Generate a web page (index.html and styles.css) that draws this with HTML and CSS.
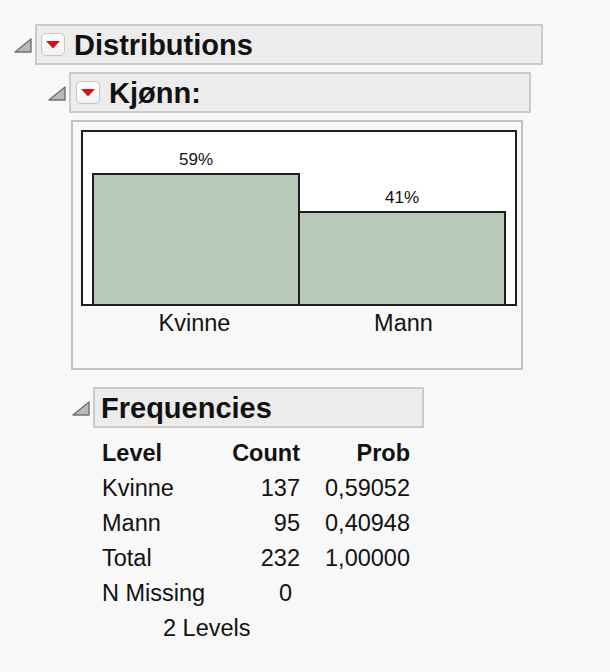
FILE: index.html
```html
<!DOCTYPE html>
<html lang="no">
<head>
<meta charset="utf-8">
<title>Distributions</title>
<link rel="stylesheet" href="styles.css">
</head>
<body>
<div class="report">
  <section class="outline">
    <div class="outline-head">
      <svg class="toggle" viewBox="0 0 18 15" width="18" height="15"><polygon points="1,14 17,14 17,1" /></svg>
      <div class="title-box box-dist">
        <span class="menu-btn"><svg viewBox="0 0 14 8" width="14" height="8"><polygon points="0,0 14,0 7,7.5" /></svg></span>
        <span class="title">Distributions</span>
      </div>
    </div>
    <div class="outline-body body-dist">
      <section class="outline">
        <div class="outline-head">
          <svg class="toggle" viewBox="0 0 18 15" width="18" height="15"><polygon points="1,14 17,14 17,1" /></svg>
          <div class="title-box box-var">
            <span class="menu-btn"><svg viewBox="0 0 14 8" width="14" height="8"><polygon points="0,0 14,0 7,7.5" /></svg></span>
            <span class="title">Kjønn:</span>
          </div>
        </div>
        <div class="outline-body body-var">
          <div class="chart-box">
            <div class="plot">
              <div class="col">
                <span class="pct">59%</span>
                <div class="bar" style="height:129px"></div>
              </div>
              <div class="col col-next">
                <span class="pct">41%</span>
                <div class="bar" style="height:91px"></div>
              </div>
            </div>
            <div class="axis">
              <span class="axis-label">Kvinne</span>
              <span class="axis-label">Mann</span>
            </div>
          </div>

          <section class="outline freq">
            <div class="outline-head">
              <svg class="toggle" viewBox="0 0 18 15" width="18" height="15"><polygon points="1,14 17,14 17,1" /></svg>
              <div class="title-box box-freq">
                <span class="title">Frequencies</span>
              </div>
            </div>
            <div class="freq-table">
              <span class="th">Level</span><span class="th num">Count</span><span class="th num">Prob</span>
              <span>Kvinne</span><span class="num">137</span><span class="num">0,59052</span>
              <span>Mann</span><span class="num">95</span><span class="num">0,40948</span>
              <span>Total</span><span class="num">232</span><span class="num">1,00000</span>
              <span>N Missing</span><span class="num missing">0</span><span></span>
              <span class="levels">2 Levels</span>
            </div>
          </section>
        </div>
      </section>
    </div>
  </section>
</div>
</body>
</html>
```

FILE: styles.css
```css
html, body {
  margin: 0;
  background: #f8f8f8;
}

body {
  font-family: "Liberation Sans", Arial, sans-serif;
  color: #121212;
}

.report {
  padding: 24px 0 0 14px;
}

/* outline node header: disclosure triangle + title bar */
.outline-head {
  display: flex;
  align-items: center;
}

.toggle {
  flex: none;
  margin-right: 3px;
  margin-top: 1px;
}

.toggle polygon {
  fill: #b9b9b9;
  stroke: #707070;
  stroke-width: 1.4;
  stroke-linejoin: round;
}

.title-box {
  box-sizing: border-box;
  height: 41px;
  display: flex;
  align-items: center;
  gap: 9px;
  padding: 0 5px 0 4px;
  background: #ececec;
  border: 2px solid #cbcbcb;
}

.box-dist { width: 508px; }
.box-var { width: 462px; padding-left: 5px; }
.box-freq { width: 331px; padding-left: 6px; }

.menu-btn {
  box-sizing: border-box;
  width: 24px;
  height: 23px;
  display: flex;
  align-items: center;
  justify-content: center;
  background: linear-gradient(#ffffff, #f2f2f2);
  border: 1.5px solid #c6c6c6;
  border-radius: 5px;
}

.menu-btn svg {
  margin-top: 1px;
}

.menu-btn polygon {
  fill: #d2121c;
}

.title {
  font-weight: bold;
  font-size: 29px;
  line-height: 1;
  margin-top: 1px;
}

.body-dist {
  margin: 7px 0 0 34px;
}

.body-var {
  margin: 7px 0 0 23px;
}

/* bar chart */
.chart-box {
  box-sizing: border-box;
  width: 452px;
  height: 250px;
  border: 2px solid #c2c2c2;
  padding: 8px 4px 0 8px;
}

.plot {
  box-sizing: border-box;
  height: 176px;
  display: flex;
  align-items: flex-end;
  padding: 0 9px;
  background: #ffffff;
  border: 2px solid #1e1e1e;
}

.col {
  flex: 1;
  display: flex;
  flex-direction: column;
  align-items: center;
}

.col-next {
  margin-left: -2px;
}

.pct {
  font-size: 17px;
  line-height: 20px;
  margin-bottom: 3px;
}

.bar {
  align-self: stretch;
  background: #b8c8b9;
  border: 2px solid #1e1e1e;
  border-bottom: none;
}

.axis {
  display: flex;
  padding: 0 9px;
}

.axis-label {
  flex: 1;
  text-align: center;
  font-size: 23.5px;
  line-height: 34px;
}

/* frequencies table */
.freq {
  margin: 17px 0 0 1px;
}

.freq-table {
  display: grid;
  grid-template-columns: 110px 88px 110px;
  margin: 8px 0 0 30px;
  font-size: 23.5px;
  line-height: 35px;
}

.th {
  font-weight: bold;
}

.num {
  text-align: right;
}

.missing {
  padding-right: 8px;
}

.levels {
  grid-column: 1 / -1;
  padding-left: 61px;
}
```
